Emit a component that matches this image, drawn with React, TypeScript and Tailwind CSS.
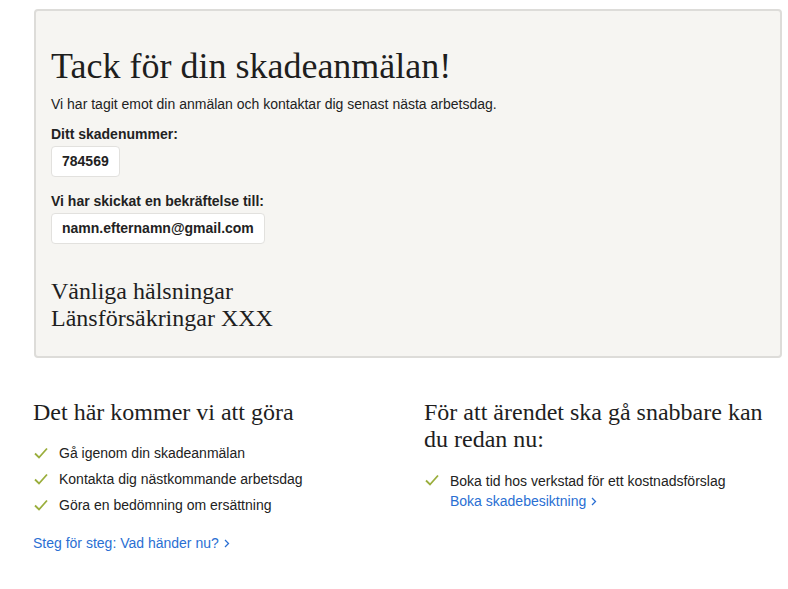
import React from 'react';

const serif = { fontFamily: '"Liberation Serif", "Times New Roman", serif' };

const Check: React.FC = () => (
    <svg width="14" height="12" viewBox="0 0 14 12" className="shrink-0">
        <path d="M1 6.5 L5 10.5 L13 1.5" fill="none" stroke="#9aae3c" strokeWidth="1.8" />
    </svg>
);

const Chevron: React.FC = () => (
    <svg width="6" height="9" viewBox="0 0 6 9" className="inline-block ml-[5px] mb-[1px]">
        <path d="M1 1 L4.5 4.5 L1 8" fill="none" stroke="currentColor" strokeWidth="1.3" />
    </svg>
);

const App: React.FC = () => {
    const steps = ['Gå igenom din skadeanmälan', 'Kontakta dig nästkommande arbetsdag', 'Göra en bedömning om ersättning'];

    return (
        <div className="w-[788px] h-[589px] bg-white text-[#222]" style={{ fontFamily: '"Liberation Sans", Arial, sans-serif' }}>
            <div className="pt-[9px] pl-[34px] pr-[6px]">
                {/* Confirmation panel */}
                <section className="h-[349px] bg-[#f6f5f2] border-2 border-[#dddcd9] rounded-[4px] px-[15px] pt-[33px]">
                    <h1 className="text-[36px] leading-[44px] text-[#1e1e1e]" style={serif}>Tack för din skadeanmälan!</h1>
                    <p className="text-[14px] leading-[18px] mt-[7px]">Vi har tagit emot din anmälan och kontaktar dig senast nästa arbetsdag.</p>

                    <div className="mt-[12px] text-[14px] leading-[18px] font-bold">Ditt skadenummer:</div>
                    <div className="mt-[3px] inline-block h-[31px] px-[10px] bg-white border border-[#e2e1de] rounded-[4px] text-[14px] leading-[29px] font-bold">784569</div>

                    <div className="mt-[15px] text-[14px] leading-[18px] font-bold">Vi har skickat en bekräftelse till:</div>
                    <div className="mt-[3px] inline-block h-[31px] px-[10px] bg-white border border-[#e2e1de] rounded-[4px] text-[14px] leading-[29px] font-bold">namn.efternamn@gmail.com</div>

                    <div className="mt-[34px] text-[24px] leading-[27px] text-[#1e1e1e]" style={serif}>
                        <div>Vänliga hälsningar</div>
                        <div>Länsförsäkringar XXX</div>
                    </div>
                </section>
            </div>

            <div className="grid grid-cols-[391px_1fr] pl-[33px] pr-[6px] pt-[41px]">
                <div>
                    <h2 className="text-[24px] leading-[27px] text-[#1e1e1e]" style={serif}>Det här kommer vi att göra</h2>
                    <ul className="mt-[18px] flex flex-col gap-[8px]">
                        {steps.map((s) => (
                            <li key={s} className="flex items-center gap-[11px] text-[14px] leading-[18px] pl-[1px]">
                                <Check />
                                <span>{s}</span>
                            </li>
                        ))}
                    </ul>
                    <a className="block mt-[20px] text-[14px] leading-[18px] text-[#2a6fd3]">
                        Steg för steg: Vad händer nu?<Chevron />
                    </a>
                </div>
                <div>
                    <h2 className="text-[24px] leading-[27px] text-[#1e1e1e] w-[350px]" style={serif}>För att ärendet ska gå snabbare kan du redan nu:</h2>
                    <div className="mt-[18px] flex gap-[11px] pl-[1px]">
                        <div className="pt-[3px]"><Check /></div>
                        <div className="text-[14px] leading-[20px]">
                            <div>Boka tid hos verkstad för ett kostnadsförslag</div>
                            <a className="block text-[#2a6fd3]">Boka skadebesiktning<Chevron /></a>
                        </div>
                    </div>
                </div>
            </div>
        </div>
    );
};

export default App;
